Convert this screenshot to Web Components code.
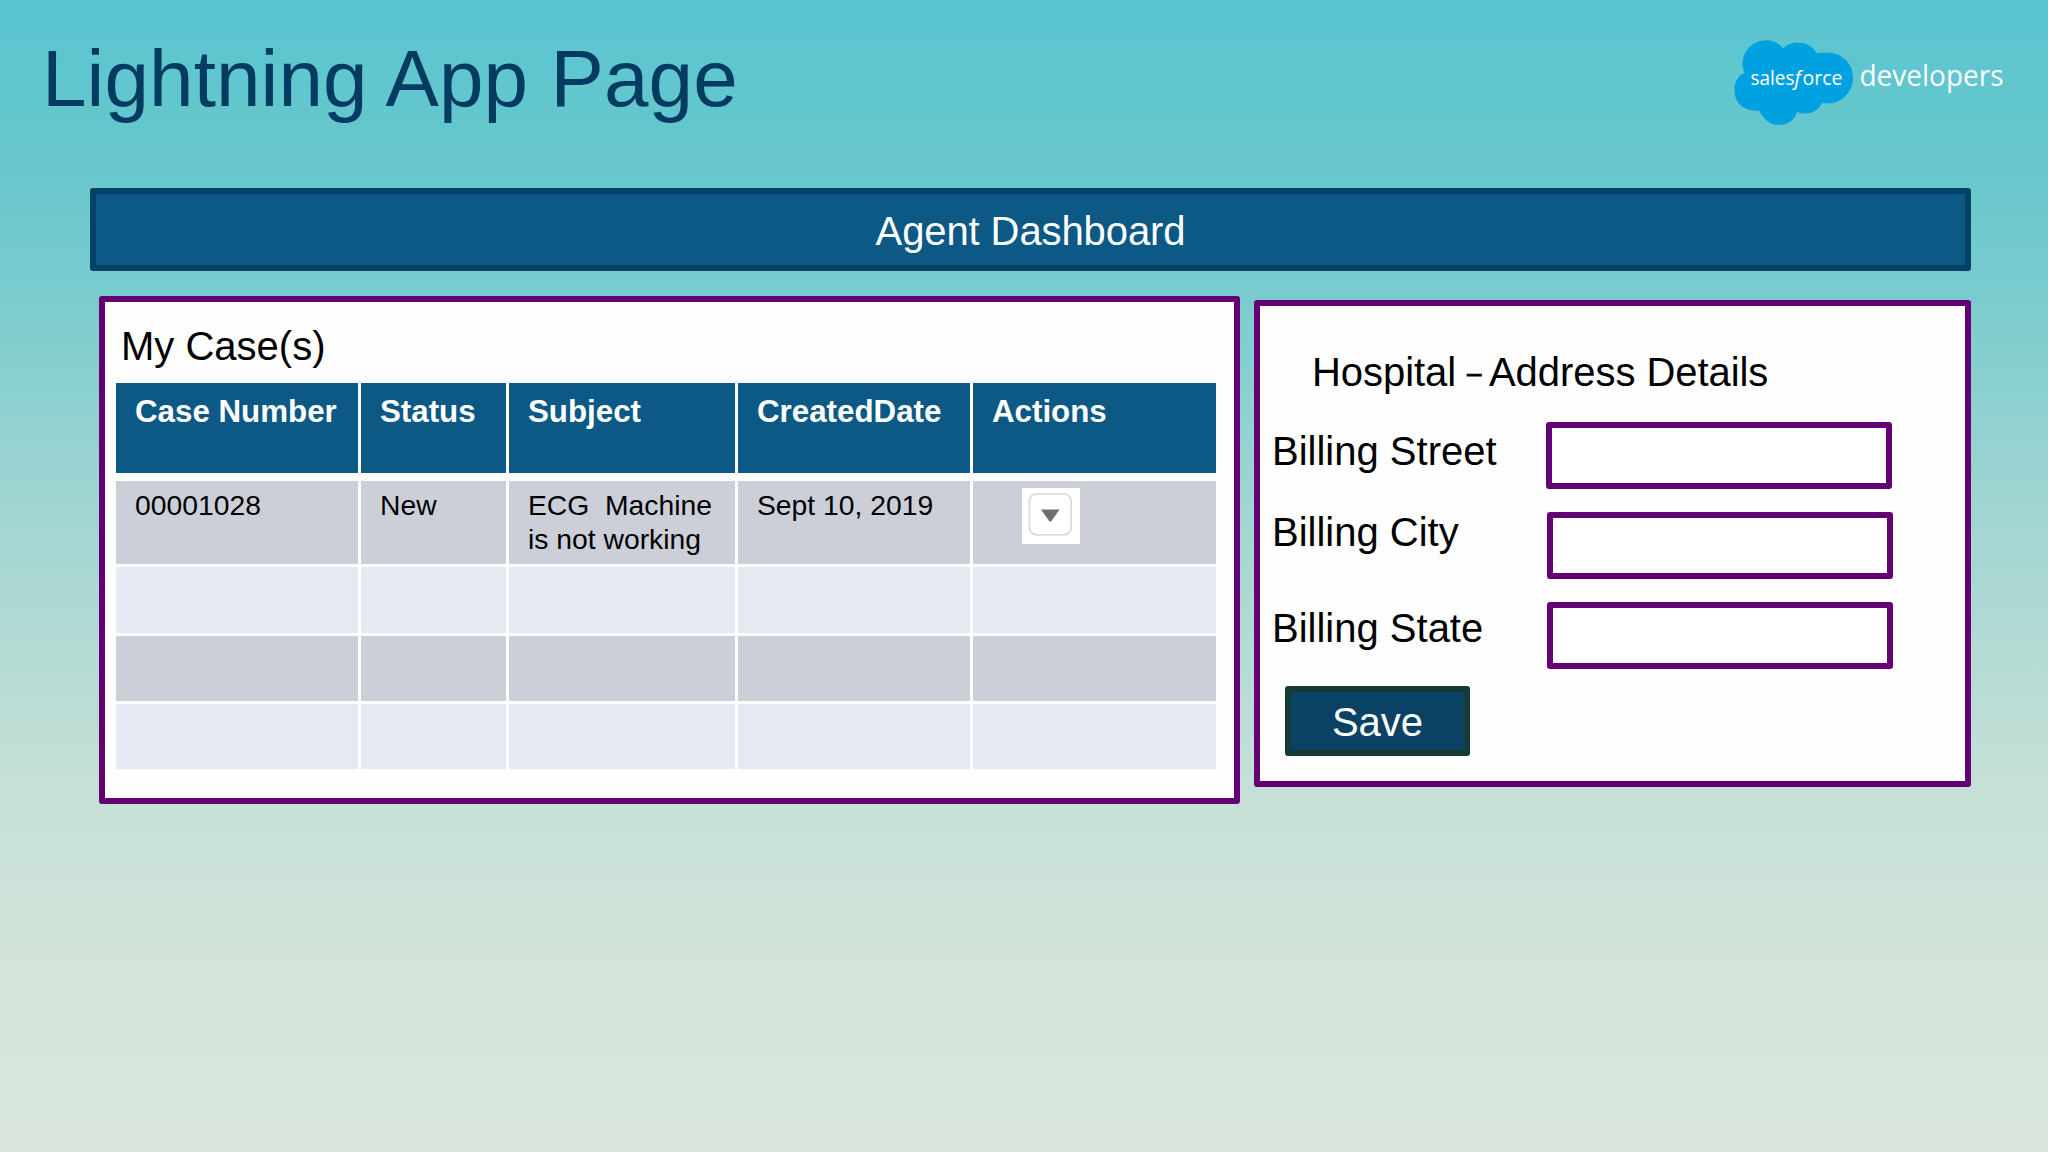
<!DOCTYPE html>
<html lang="en">
<head>
<meta charset="utf-8">
<title>Lightning App Page</title>
<style>
    body {
        margin: 0;
        font-family: "Liberation Sans", Arial, sans-serif;
        color: #000;
    }
</style>
</head>
<body>
<app-page>
    <page-header slot="header">Lightning App Page</page-header>
    <app-banner slot="banner">Agent Dashboard</app-banner>
    <case-list>My Case(s)</case-list>
    <address-form></address-form>
</app-page>

<script>
class AppPage extends HTMLElement {

    constructor() {
        super();
        this.shadowDOM = this.attachShadow({mode: "open"});
    }

    connectedCallback() {
        this.render();
    }

    render() {
        this.shadowDOM.innerHTML = `
        <style>
            :host {
                display: flex;
                flex-direction: column;
                box-sizing: border-box;
                width: 2048px;
                height: 1152px;
                overflow: hidden;
                background: linear-gradient(#5ac5d1 0%, #67c7cc 14%, #79cbce 25%, #a4d6d2 46%, #c5e0d6 68%, #d3e4da 84%, #dae6db 100%);
            }

            main {
                display: flex;
                align-items: flex-start;
                gap: 14px;
                padding: 25px 0 0 99px;
            }
        </style>
        <slot name="header"></slot>
        <slot name="banner"></slot>
        <main><slot></slot></main>`;
    }
}

class PageHeader extends HTMLElement {

    constructor() {
        super();
        this.shadowDOM = this.attachShadow({mode: "open"});
    }

    connectedCallback() {
        this.render();
    }

    render() {
        this.shadowDOM.innerHTML = `
        <style>
            :host {
                display: flex;
                justify-content: space-between;
                align-items: flex-start;
                box-sizing: border-box;
                height: 188px;
                padding: 32px 38px 0 42px;
            }

            h1 {
                margin: 1px 0 0;
                font-size: 80px;
                line-height: 92px;
                font-weight: 400;
                letter-spacing: 0.1px;
                color: #033b61;
                white-space: nowrap;
            }
        </style>
        <h1><slot></slot></h1>
        <developers-logo></developers-logo>`;
    }
}

class DevelopersLogo extends HTMLElement {

    constructor() {
        super();
        this.shadowDOM = this.attachShadow({mode: "open"});
    }

    connectedCallback() {
        this.render();
    }

    render() {
        this.shadowDOM.innerHTML = `
        <style>
            :host {
                display: block;
                width: 280px;
                height: 96px;
            }

            svg {
                display: block;
            }

            text {
                font-family: "Open Sans", "Noto Sans", sans-serif;
                fill: #fff;
            }
        </style>
        <svg width="280" height="96" viewBox="1730 32 280 96">
            <path fill="#00a1e0" d="M1783 48.500 C1775 37 1757 38 1748.500 48 C1742 55 1741 65 1744.500 73 C1737 76 1734 84 1734.500 92 C1735 104 1746 112 1759 110.500 C1763 119 1770 125 1779 125 C1788 125 1794 120 1797.500 112 C1807 116 1818 112 1822 103 C1839 106 1853 94 1853 78 C1853 60 1837 49 1817 53.500 C1810 41 1792 39 1783 48.500 Z"/>
            <text x="1750.500" y="85" font-size="20" font-weight="500" textLength="44" lengthAdjust="spacingAndGlyphs">sales</text>
            <text x="1794.500" y="85" font-size="20" font-weight="500" font-style="italic">f</text>
            <text x="1802.500" y="85" font-size="20" font-weight="500" textLength="40" lengthAdjust="spacingAndGlyphs">orce</text>
            <text x="1859.500" y="85.500" font-size="29.500" font-weight="400" textLength="144" lengthAdjust="spacingAndGlyphs">developers</text>
        </svg>`;
    }
}

class AppBanner extends HTMLElement {

    constructor() {
        super();
        this.shadowDOM = this.attachShadow({mode: "open"});
    }

    connectedCallback() {
        this.render();
    }

    render() {
        this.shadowDOM.innerHTML = `
        <style>
            :host {
                display: block;
                box-sizing: border-box;
                width: 1881px;
                height: 83px;
                margin-left: 90px;
                padding-top: 14px;
                border: 6px solid #044166;
                border-radius: 3px;
                background: #0c5985;
                color: #fff;
                font-size: 40px;
                line-height: 46px;
                letter-spacing: -0.1px;
                text-align: center;
            }
        </style>
        <slot></slot>`;
    }
}

class CaseList extends HTMLElement {

    constructor() {
        super();
        this.shadowDOM = this.attachShadow({mode: "open"});
        this.columns = ["Case Number", "Status", "Subject", "CreatedDate", "Actions"];
        this.cases = [
            ["00001028", "New", "ECG&nbsp; Machine is not working", "Sept 10, 2019", "<row-menu></row-menu>"],
            ["", "", "", "", ""],
            ["", "", "", "", ""],
            ["", "", "", "", ""]
        ];
    }

    connectedCallback() {
        this.render();
    }

    render() {
        this.shadowDOM.innerHTML = `
        <style>
            :host {
                display: block;
                box-sizing: border-box;
                width: 1141px;
                height: 508px;
                padding: 21px 0 0 11px;
                border: 6px solid #630073;
                border-radius: 3px;
                background: #fefefe;
            }

            h2 {
                margin: 0 0 14px 5px;
                font-size: 40px;
                line-height: 46px;
                font-weight: 400;
            }

            .table {
                display: grid;
                grid-template-columns: 242px 145px 226px 232px 243px;
                gap: 3px;
            }

            .top {
                grid-template-rows: 90px;
            }

            /* the header is set off from the rows by a wider rule */
            .body {
                grid-template-rows: 83px 66px 65px 65px;
                margin-top: 8px;
            }

            .cell {
                padding: 7px 0 0 19px;
                font-size: 28.3px;
                line-height: 34px;
                background: #e6e9f1;
            }

            .head {
                padding-top: 11px;
                font-size: 31.3px;
                line-height: 36px;
                font-weight: 700;
                color: #fff;
                background: #0c5985;
            }

            .dark {
                background: #cccfd8;
            }
        </style>
        <h2><slot></slot></h2>
        <div class="table top">
            ${this.columns.map(name => `<div class="cell head">${name}</div>`).join("")}
        </div>
        <div class="table body">
            ${this.cases.map((row, i) => row.map(value =>
                `<div class="cell ${i % 2 ? "" : "dark"}">${value}</div>`).join("")).join("")}
        </div>`;
    }
}

class RowMenu extends HTMLElement {

    constructor() {
        super();
        this.shadowDOM = this.attachShadow({mode: "open"});
    }

    connectedCallback() {
        this.render();
    }

    render() {
        this.shadowDOM.innerHTML = `
        <style>
            :host {
                display: block;
                width: 58px;
                height: 56px;
                margin-left: 30px;
                background: #fff;
            }

            svg {
                display: block;
            }
        </style>
        <svg width="58" height="56" viewBox="0 0 58 56">
            <rect x="7.500" y="5.800" width="41.500" height="41" rx="7" fill="#fff" stroke="#dddbdd" stroke-width="1.800"/>
            <path d="M19 21.500h18.500l-8 11.500q-1.200 1.500-2.400 0z" fill="#706f70"/>
        </svg>`;
    }
}

class AddressForm extends HTMLElement {

    constructor() {
        super();
        this.shadowDOM = this.attachShadow({mode: "open"});
    }

    connectedCallback() {
        this.render();
    }

    render() {
        this.shadowDOM.innerHTML = `
        <style>
            :host {
                display: block;
                box-sizing: border-box;
                width: 717px;
                height: 487px;
                margin-top: 4px;
                padding: 43px 0 0 12px;
                border: 6px solid #630073;
                border-radius: 3px;
                background: #fefefe;
                font-size: 40px;
                line-height: 46px;
            }

            h2 {
                margin: 0 0 27px 40px;
                font-size: 40px;
                line-height: 46px;
                font-weight: 400;
                letter-spacing: -0.05px;
                white-space: nowrap;
            }

            .dash {
                font-size: 25px;
                line-height: 1;
                letter-spacing: -1px;
                vertical-align: 4px;
                -webkit-text-stroke: 1.2px #000;
            }

            .fields {
                display: grid;
                row-gap: 23px;
            }

            .save {
                box-sizing: border-box;
                width: 185px;
                height: 70px;
                margin: 17px 0 0 13px;
                padding-top: 7px;
                border: 6px solid #163a36;
                border-radius: 3px;
                background: #0a4265;
                color: #fff;
                text-align: center;
            }
        </style>
        <h2>Hospital <span class="dash">–</span> Address Details</h2>
        <div class="fields">
            <form-field style="--label-top: 6px; --box-left: 0px">Billing Street</form-field>
            <form-field style="--label-top: -3px; --box-left: 1px">Billing City</form-field>
            <form-field style="--label-top: 3px; --box-left: 1px">Billing State</form-field>
        </div>
        <div class="save">Save</div>`;
    }
}

class FormField extends HTMLElement {

    constructor() {
        super();
        this.shadowDOM = this.attachShadow({mode: "open"});
    }

    connectedCallback() {
        this.render();
    }

    render() {
        this.shadowDOM.innerHTML = `
        <style>
            :host {
                display: grid;
                grid-template-columns: 274px 346px;
                height: 67px;
            }

            label {
                margin-top: var(--label-top);
                white-space: nowrap;
            }

            .box {
                box-sizing: border-box;
                height: 67px;
                margin-left: var(--box-left);
                margin-right: calc(-1 * var(--box-left));
                border: 6px solid #630073;
                border-radius: 3px;
                background: #fff;
            }
        </style>
        <label><slot></slot></label>
        <div class="box"></div>`;
    }
}

customElements.define("developers-logo", DevelopersLogo);
customElements.define("row-menu", RowMenu);
customElements.define("form-field", FormField);
customElements.define("app-page", AppPage);
customElements.define("page-header", PageHeader);
customElements.define("app-banner", AppBanner);
customElements.define("case-list", CaseList);
customElements.define("address-form", AddressForm);
</script>
</body>
</html>
